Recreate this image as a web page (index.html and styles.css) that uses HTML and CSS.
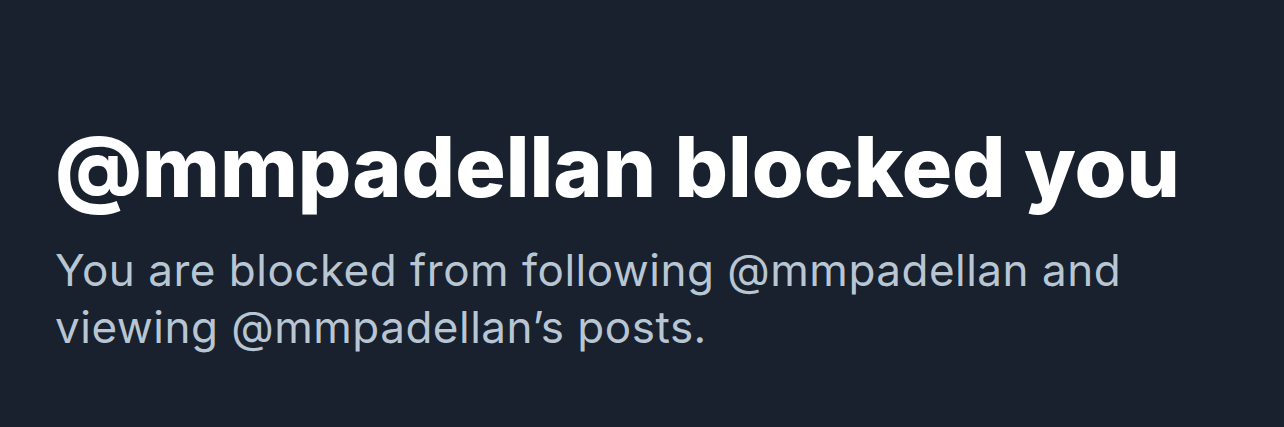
FILE: index.html
```html
<!DOCTYPE html>
<html lang="en">
<head>
<meta charset="utf-8">
<link rel="stylesheet" href="styles.css">
</head>
<body>
<main class="blocked">
  <h1 class="blocked-title">@mmpadellan blocked you</h1>
  <p class="blocked-text">You are blocked from following @mmpadellan and viewing @mmpadellan’s posts.</p>
</main>
</body>
</html>
```
FILE: styles.css
```css
html, body {
  margin: 0;
  padding: 0;
  background: #18212d;
  height: 100%;
  overflow: hidden;
}
.blocked {
  padding: 124px 0 0 55px;
  width: 1180px;
  font-family: Inter, "Liberation Sans", sans-serif;
}
.blocked-title {
  margin: 0;
  color: #ffffff;
  font-size: 84px;
  font-weight: 800;
  line-height: 86px;
  letter-spacing: 0;
  white-space: nowrap;
}
.blocked-text {
  margin: 32px 0 0;
  width: 1110px;
  color: #b8c6d4;
  font-size: 44px;
  font-weight: 400;
  line-height: 57px;
  letter-spacing: 0.5px;
}
```
